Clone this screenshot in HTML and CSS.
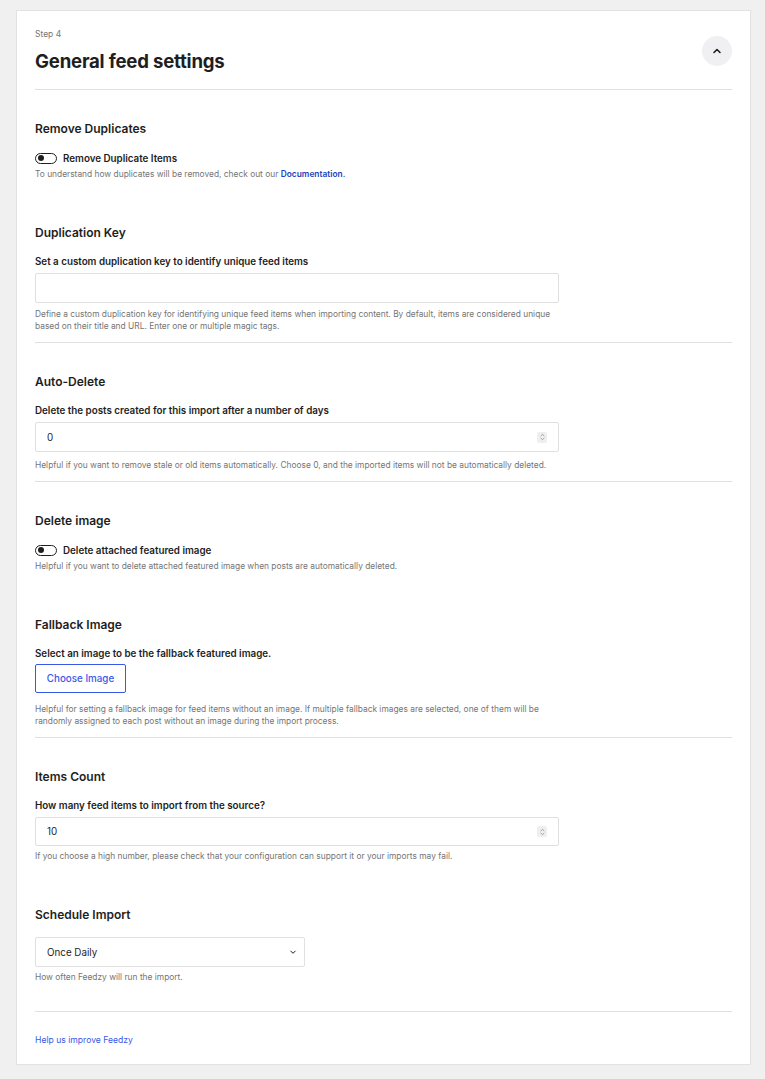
FILE: index.html
```html
<!DOCTYPE html>
<html lang="en">
<head>
    <meta charset="UTF-8">
    <meta name="viewport" content="width=device-width, initial-scale=1.0">
    <title>General feed settings</title>
    <link rel="stylesheet" href="styles.css">
</head>
<body>
    <div class="card">
        <div class="card-header">
            <div>
                <div class="step">Step 4</div>
                <h2 class="title">General feed settings</h2>
            </div>
            <button class="collapse-btn" aria-label="Collapse">
                <svg width="12" height="12" viewBox="0 0 12 12"><path d="M3 7.5 L6 4.5 L9 7.5" fill="none" stroke="#1e1e1e" stroke-width="1.6" stroke-linecap="round" stroke-linejoin="round"/></svg>
            </button>
        </div>

        <div class="group">
            <div class="field">
                <h3>Remove Duplicates</h3>
                <label class="toggle-row">
                    <span class="toggle"><span class="knob"></span></span>
                    <span class="toggle-label">Remove Duplicate Items</span>
                </label>
                <p class="help">To understand how duplicates will be removed, check out our <a href="#" class="doc-link">Documentation.</a></p>
            </div>
            <div class="field">
                <h3>Duplication Key</h3>
                <div class="label">Set a custom duplication key to identify unique feed items</div>
                <input type="text" class="text-input">
                <p class="help">Define a custom duplication key for identifying unique feed items when importing content. By default, items are considered unique based on their title and URL. Enter one or multiple magic tags.</p>
            </div>
        </div>

        <div class="group">
            <div class="field">
                <h3>Auto-Delete</h3>
                <div class="label">Delete the posts created for this import after a number of days</div>
                <div class="number-input">
                    <input type="text" value="0">
                    <span class="spinner">
                        <svg width="9" height="10" viewBox="0 0 9 10"><path d="M2.7 4 L4.5 2.4 L6.3 4 M2.7 6 L4.5 7.6 L6.3 6" fill="none" stroke="#8a8a8a" stroke-width="0.8"/></svg>
                    </span>
                </div>
                <p class="help help-wide">Helpful if you want to remove stale or old items automatically. Choose 0, and the imported items will not be automatically deleted.</p>
            </div>
        </div>

        <div class="group">
            <div class="field">
                <h3>Delete image</h3>
                <label class="toggle-row">
                    <span class="toggle"><span class="knob"></span></span>
                    <span class="toggle-label">Delete attached featured image</span>
                </label>
                <p class="help">Helpful if you want to delete attached featured image when posts are automatically deleted.</p>
            </div>
            <div class="field">
                <h3>Fallback Image</h3>
                <div class="label">Select an image to be the fallback featured image.</div>
                <button class="choose-btn">Choose Image</button>
                <p class="help help-spaced">Helpful for setting a fallback image for feed items without an image. If multiple fallback images are selected, one of them will be randomly assigned to each post without an image during the import process.</p>
            </div>
        </div>

        <div class="group group-last">
            <div class="field">
                <h3>Items Count</h3>
                <div class="label">How many feed items to import from the source?</div>
                <div class="number-input number-input-compact">
                    <input type="text" value="10">
                    <span class="spinner">
                        <svg width="9" height="10" viewBox="0 0 9 10"><path d="M2.7 4 L4.5 2.4 L6.3 4 M2.7 6 L4.5 7.6 L6.3 6" fill="none" stroke="#8a8a8a" stroke-width="0.8"/></svg>
                    </span>
                </div>
                <p class="help">If you choose a high number, please check that your configuration can support it or your imports may fail.</p>
            </div>
            <div class="field">
                <h3>Schedule Import</h3>
                <div class="select-box">
                    <span>Once Daily</span>
                    <svg width="10" height="10" viewBox="0 0 10 10"><path d="M2.5 3.8 L5 6.3 L7.5 3.8" fill="none" stroke="#1e1e1e" stroke-width="1"/></svg>
                </div>
                <p class="help">How often Feedzy will run the import.</p>
            </div>
        </div>

        <div class="card-footer">
            <a href="#" class="footer-link">Help us improve Feedzy</a>
        </div>
    </div>
</body>
</html>
```

FILE: styles.css
```css
body {
    margin: 0;
    background-color: #f0f0f0;
    font-family: Inter, "Noto Sans", sans-serif;
    color: #1e1e1e;
}
.card {
    box-sizing: border-box;
    width: 735px;
    margin: 10px 0 14px 16px;
    padding: 0 18px;
    background-color: #fff;
    border: 1px solid #e2e2e2;
}
.card-header {
    display: flex;
    justify-content: space-between;
    align-items: flex-start;
    padding: 17px 0 15px;
    border-bottom: 1px solid #e0e0e0;
}
.step {
    font-size: 8.5px;
    line-height: 12px;
    color: #757575;
}
.title {
    margin: 8px 0 0;
    font-size: 18.6px;
    line-height: 26px;
    font-weight: 700;
    letter-spacing: -0.2px;
}
.collapse-btn {
    width: 30px;
    height: 30px;
    margin-top: 8px;
    border: none;
    border-radius: 50%;
    background-color: #f0f0f3;
    display: flex;
    align-items: center;
    justify-content: center;
    padding: 0;
}
.group {
    padding: 30px 0 10px;
    border-bottom: 1px solid #e0e0e0;
    display: flex;
    flex-direction: column;
    gap: 44px;
}
.group-last {
    padding-bottom: 28px;
}
.field h3 {
    margin: 0;
    font-size: 12px;
    line-height: 18px;
    font-weight: 600;
}
.label {
    margin-top: 13px;
    font-size: 9.8px;
    line-height: 14px;
    font-weight: 600;
}
.help {
    margin: 5px 0 0;
    max-width: 532px;
    font-size: 8.4px;
    line-height: 12px;
    color: #757575;
}
.help-spaced {
    margin-top: 10px;
}
.doc-link {
    color: #1d3fbb;
    font-weight: 600;
    text-decoration: none;
}
.toggle-row {
    display: flex;
    align-items: center;
    gap: 6px;
    margin-top: 12px;
    height: 16px;
}
.toggle {
    box-sizing: border-box;
    width: 22px;
    height: 11px;
    border: 1px solid #1e1e1e;
    border-radius: 6px;
    display: flex;
    align-items: center;
    padding-left: 1.5px;
}
.knob {
    width: 6px;
    height: 6px;
    border-radius: 50%;
    background-color: #1e1e1e;
}
.toggle-label {
    font-size: 9.8px;
    font-weight: 600;
}
.toggle-row + .help {
    margin-top: 2px;
}
.text-input {
    display: block;
    box-sizing: border-box;
    width: 524px;
    height: 30px;
    margin-top: 4px;
    border: 1px solid #e0e0e0;
    border-radius: 2px;
    background: #fff;
}
.number-input {
    box-sizing: border-box;
    width: 524px;
    height: 30px;
    margin-top: 4px;
    border: 1px solid #e0e0e0;
    border-radius: 2px;
    display: flex;
    align-items: center;
    padding: 0 11px 0 11px;
}
.number-input-compact {
    height: 29px;
}
.number-input input {
    flex: 1;
    border: none;
    outline: none;
    padding: 0;
    font-family: inherit;
    font-size: 9.8px;
    color: #1e1e1e;
    background: transparent;
}
.number-input + .help {
    margin-top: 4px;
}
.number-input + .help-wide {
    margin-top: 7px;
}
.spinner {
    display: flex;
    width: 10px;
    height: 11px;
    background-color: #efefef;
    border-radius: 2px;
    align-items: center;
    justify-content: center;
}
.choose-btn {
    display: block;
    box-sizing: border-box;
    width: 91px;
    height: 29px;
    margin-top: 3px;
    border: 1px solid #3858e9;
    border-radius: 2px;
    background: #fff;
    color: #3858e9;
    font-family: inherit;
    font-size: 9.8px;
    font-weight: 500;
    padding: 0;
}
.select-box {
    box-sizing: border-box;
    width: 270px;
    height: 30px;
    margin-top: 13px;
    border: 1px solid #e0e0e0;
    border-radius: 2px;
    display: flex;
    align-items: center;
    justify-content: space-between;
    padding: 0 6px 0 11px;
    font-size: 9.8px;
}
.select-box + .help {
    margin-top: 4px;
}
.card-footer {
    padding: 22px 0 18px;
}
.footer-link {
    font-size: 8.6px;
    line-height: 12px;
    color: #3858e9;
    text-decoration: none;
    display: block;
}
```
